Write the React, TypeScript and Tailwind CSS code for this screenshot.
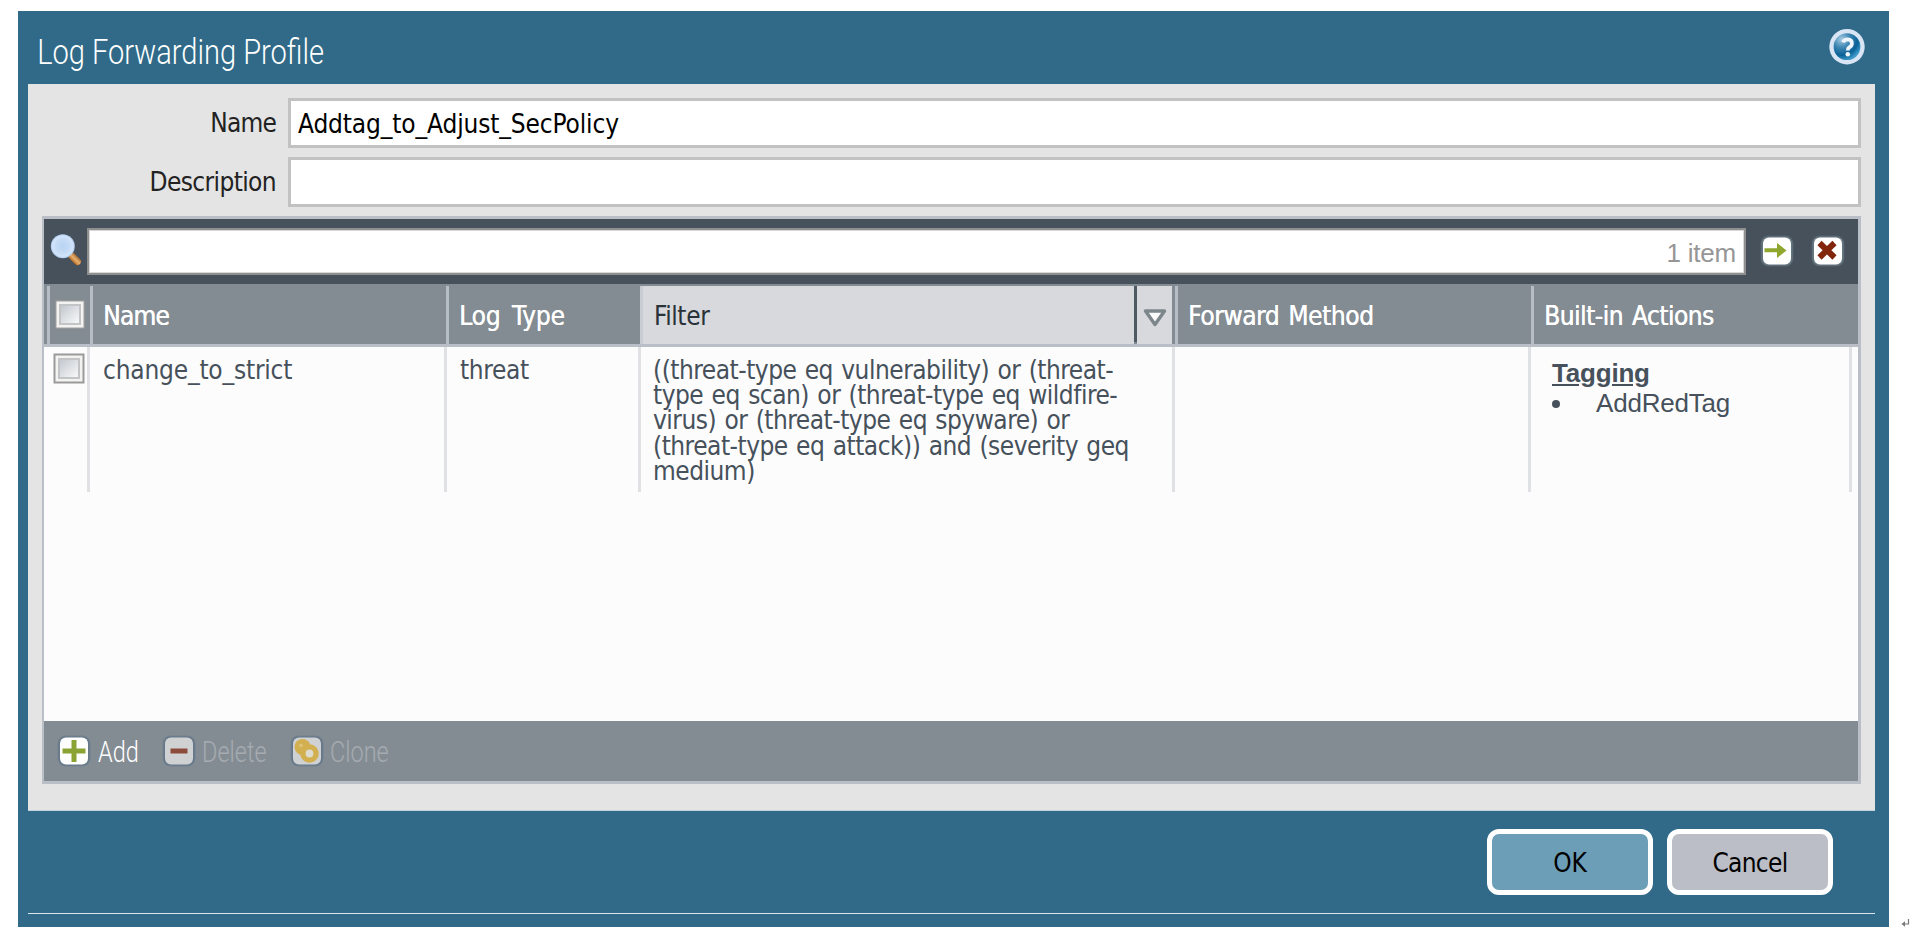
import React from "react";

const ui = "font-['DejaVu_Sans_Condensed','DejaVu_Sans',sans-serif] [font-stretch:condensed] text-[26px] whitespace-nowrap";

function SearchIcon() {
  return (
    <svg width="32" height="34" viewBox="0 0 32 34">
      <defs>
        <radialGradient id="lens" cx="50%" cy="50%" r="50%">
          <stop offset="0" stopColor="#b9d3f3" />
          <stop offset="0.6" stopColor="#c6dcf6" />
          <stop offset="0.85" stopColor="#d3e5fb" />
          <stop offset="1" stopColor="#a8c6ec" />
        </radialGradient>
        <linearGradient id="grip" x1="0" y1="1" x2="1" y2="0">
          <stop offset="0" stopColor="#b5651d" />
          <stop offset="0.5" stopColor="#e6b070" />
          <stop offset="1" stopColor="#a0622a" />
        </linearGradient>
      </defs>
      <path d="M22 22 L27.5 27.5" stroke="url(#grip)" strokeWidth="7" strokeLinecap="round" />
      <circle cx="12.8" cy="12.2" r="12" fill="url(#lens)" />
    </svg>
  );
}

function HelpIcon() {
  return (
    <svg width="37" height="37" viewBox="0 0 37 37">
      <defs>
        <radialGradient id="help" cx="30%" cy="22%" r="80%">
          <stop offset="0" stopColor="#a5cbe2" />
          <stop offset="0.4" stopColor="#3d86b3" />
          <stop offset="0.75" stopColor="#0a6196" />
          <stop offset="1" stopColor="#3c9ac9" />
        </radialGradient>
      </defs>
      <circle cx="18" cy="17.7" r="17.7" fill="#d9e5f5" />
      <circle cx="18" cy="17.7" r="13.4" fill="url(#help)" />
      <path d="M14 13.3 Q15 10.3 18.7 10.3 Q23 10.5 22.9 14.5 Q22.8 17.1 20.4 18.2 Q18.8 19.1 18.8 21.5" fill="none" stroke="#eef5fb" strokeWidth="3.8" />
      <circle cx="18.8" cy="25.3" r="2.3" fill="#eef5fb" />
    </svg>
  );
}

function Tile({ children, halo = "#66798a", face = "#ffffff" }: { children: React.ReactNode; halo?: string; face?: string }) {
  return (
    <svg width="34" height="32" viewBox="0 0 34 32" className="shrink-0">
      <rect x="0.5" y="0.5" width="33" height="31" rx="8" fill={halo} opacity="0.55" />
      <rect x="1.5" y="1.5" width="31" height="29" rx="7" fill={halo} />
      <rect x="3" y="2.5" width="28" height="27" rx="6" fill={face} />
      {children}
    </svg>
  );
}

function Checkbox({ dark = false }: { dark?: boolean }) {
  return (
    <svg width="32" height="31" viewBox="0 0 32 31" className="shrink-0">
      <defs>
        <linearGradient id="well" x1="0" y1="0" x2="1" y2="1">
          <stop offset="0" stopColor="#c3c9d0" />
          <stop offset="1" stopColor="#f8f8f8" />
        </linearGradient>
      </defs>
      {dark ? <rect x="0.5" y="0.5" width="31" height="30" fill="#9a9a9a" /> : <rect x="1.5" y="1.5" width="29" height="28" fill="#a3a19f" />}
      <rect x="2.5" y="2.5" width="27" height="26" fill="#f3f3f2" />
      <rect x="5" y="5" width="22" height="21" fill="#c2c4c6" />
      <rect x="7" y="7" width="18" height="17" fill="url(#well)" />
    </svg>
  );
}

function Field({ label, value, tracking }: { label: string; value: string; tracking: string }) {
  return (
    <div className="flex h-[50px]">
      <div className={`${ui} ${tracking} w-[248px] pt-[7px] text-right leading-[36px] text-[#222222]`}>{label}</div>
      <div className={`${ui} ml-3 flex-1 border-[3px] border-[#c2c2c2] bg-white pl-[7px] leading-[46px] tracking-[-0.14px] text-black`}>{value}</div>
    </div>
  );
}

function ToolLabel({ text, width, className }: { text: string; width: string; className: string }) {
  return (
    <span className={`${width} ${className}`}>
      <span className="inline-block origin-left scale-x-[0.81] pt-[2px] font-[Roboto,sans-serif] text-[29px] leading-[60px] font-light whitespace-nowrap">{text}</span>
    </span>
  );
}

const head = "border-l-[3px] border-[#b7bdc6] pl-[10px] leading-[60px] text-white [text-shadow:0.4px_0_0_#fff]";
const cell = "border-r-[3px] border-[#dfe1e5]";

export default function App() {
  return (
    <div className="flex h-[941px] w-[1913px] overflow-hidden bg-white pt-[11px] pl-[18px]">
      <div className="flex h-[916px] w-[1871px] flex-col bg-[#306a88] pr-[14px] pl-[10px]">
        <header className="flex h-[73px] justify-between pr-[9px]">
          <h1 className="origin-left scale-x-[0.83] pt-[13px] pl-[11px] font-[Roboto,sans-serif] text-[35px] leading-[58px] font-light whitespace-nowrap text-white">
            Log Forwarding Profile
          </h1>
          <div className="pt-[18px]"><HelpIcon /></div>
        </header>

        <main className="flex h-[727px] flex-col border-b border-[#c3d2dc] bg-[#e4e4e4] pt-[14px] pr-[14px]">
          <div className="flex flex-col gap-[9px]">
            <Field label="Name" value="Addtag_to_Adjust_SecPolicy" tracking="tracking-[-0.8px]" />
            <Field label="Description" value="" tracking="tracking-[-0.62px]" />
          </div>

          <section className="mt-[9px] ml-[14px] flex h-[568px] flex-col border-t-[3px] border-r-[3px] border-b-[3px] border-l-2 border-[#b9bec7] bg-[#fcfcfd]">
            <div className="flex h-[65px] bg-[#46515b]">
              <div className="w-[43px] pt-[15px] pl-[6px]"><SearchIcon /></div>
              <div className="mt-[9px] flex h-[47px] w-[1659px] justify-end border-2 border-[#8f8f8f] bg-white pr-[8px] font-['Liberation_Sans',Arial,sans-serif] text-[26px] leading-[46px] tracking-[-0.2px] text-[#969696] shadow-[inset_0_0_0_1px_#d8d8d8]">
                1 item
              </div>
              <div className="flex gap-[17px] pt-[16px] pl-[14px]">
                <Tile halo="#65757f">
                  <path d="M4.5 13.2 H17 V8 L26.5 15.5 L17 23 V17.2 H4.5 Z" fill="#8fa62f" />
                </Tile>
                <Tile halo="#65757f">
                  <path d="M8.5 8 L23.5 22.5 M23.5 8 L8.5 22.5" stroke="#82250d" strokeWidth="6" />
                </Tile>
              </div>
            </div>

            <div className={`${ui} flex h-[63px] border-b-[3px] border-[#b9bec7] bg-[#848c93] pt-[2px]`}>
              <div className="ml-[3px] flex w-[43px] border-l-[3px] border-[#b7bdc6] pt-[13px] pl-[4px]"><Checkbox /></div>
              <div className={`${head} w-[356px] tracking-[-0.75px]`}>Name</div>
              <div className={`${head} w-[194px] tracking-[-0.1px] [word-spacing:4px]`}>Log Type</div>
              <div className="flex w-[535px]">
                <div className="w-[494px] border-l-[3px] border-[#c9ccd2] bg-[#d8d9dd] pl-[11px] leading-[60px] tracking-[-0.4px] text-[#283238]">Filter</div>
                <div className="h-[56px] w-[3px] bg-[#4d5963]" />
                <div className="flex w-[35px] justify-center bg-[#d8d9dd] pt-[22px]">
                  <svg width="26" height="20" viewBox="0 0 26 20">
                    <path d="M3.5 3 H22.5 L13 16.5 Z" fill="#fbfbfb" stroke="#7d868b" strokeWidth="3.4" strokeLinejoin="round" />
                  </svg>
                </div>
              </div>
              <div className={`${head} w-[356px] tracking-[-0.4px] [word-spacing:2px]`}>Forward Method</div>
              <div className={`${head} flex-1 tracking-[-0.5px] [word-spacing:2px]`}>Built-in Actions</div>
            </div>

            <div className={`${ui} flex h-[145px] leading-[25.2px] text-[#46515b]`}>
              <div className={`${cell} flex w-[46px] pt-[6px] pl-[9px]`}><Checkbox dark /></div>
              <div className={`${cell} w-[357px] pt-[11px] pl-[13px] tracking-[-0.2px]`}>change_to_strict</div>
              <div className={`${cell} w-[194px] pt-[11px] pl-[13px] tracking-[-0.35px]`}>threat</div>
              <div className={`${cell} w-[534px] pt-[11px] pl-[12px] tracking-[-0.5px] [word-spacing:1.4px]`}>
                ((threat-type eq vulnerability) or (threat-<br />
                type eq scan) or (threat-type eq wildfire-<br />
                virus) or (threat-type eq spyware) or<br />
                (threat-type eq attack)) and (severity geq<br />
                medium)
              </div>
              <div className={`${cell} w-[356px]`} />
              <div className={`${cell} w-[321px] pt-[11px] pl-[21px] font-['Liberation_Sans',Arial,sans-serif] tracking-[-0.2px]`}>
                <div className="h-[30px] leading-[30px] font-bold underline">Tagging</div>
                <div className="flex h-[30px] items-center leading-[30px]">
                  <span className="mt-[2px] h-2 w-2 rounded-full bg-[#46515b]" />
                  <span className="ml-9">AddRedTag</span>
                </div>
              </div>
            </div>

            <div className="flex-1" />

            <footer className="flex h-[60px] bg-[#848c93] pl-[13px]">
              <div className="flex w-[105px] items-center">
                <Tile><path d="M5.5 16 H28.5 M17 5 V27" stroke="#8aa332" strokeWidth="5" /></Tile>
                <ToolLabel text="Add" width="ml-[7px]" className="text-white" />
              </div>
              <div className="flex w-[128px] items-center">
                <Tile face="#cfd1d3"><path d="M8.5 16 H25.5" stroke="#8b4c3c" strokeWidth="5" /></Tile>
                <ToolLabel text="Delete" width="ml-[6px]" className="text-[#a5abb1]" />
              </div>
              <div className="flex items-center">
                <Tile face="#cfd1d3">
                  <circle cx="12.5" cy="12" r="8" fill="#d3b04f" />
                  <circle cx="19.5" cy="18.5" r="6.6" fill="#dedbd0" stroke="#d3b04f" strokeWidth="5.4" />
                  <circle cx="11" cy="10.5" r="1.8" fill="#dcc27a" />
                </Tile>
                <ToolLabel text="Clone" width="ml-[6px]" className="text-[#a5abb1]" />
              </div>
            </footer>
          </section>
        </main>

        <div className="flex h-[103px] justify-end gap-[14px] border-b border-[#dbe6ec] pt-[18px] pr-[42px]">
          <button className={`${ui} h-[66px] w-[166px] rounded-[12px] border-[5px] border-white bg-[#6c9fb7] pt-[2px] tracking-[-0.2px] text-black`}>OK</button>
          <button className={`${ui} h-[66px] w-[166px] rounded-[12px] border-[5px] border-white bg-[#bbbec6] pt-[2px] tracking-[-0.7px] text-black`}>Cancel</button>
        </div>
      </div>
      <svg width="9" height="10" viewBox="0 0 9 10" className="mt-[907px] ml-[12px]">
        <path d="M7.5 1 V6 H3" fill="none" stroke="#777" strokeWidth="1.2" />
        <path d="M0.5 6 L4 3.2 V8.8 Z" fill="#777" />
      </svg>
    </div>
  );
}
